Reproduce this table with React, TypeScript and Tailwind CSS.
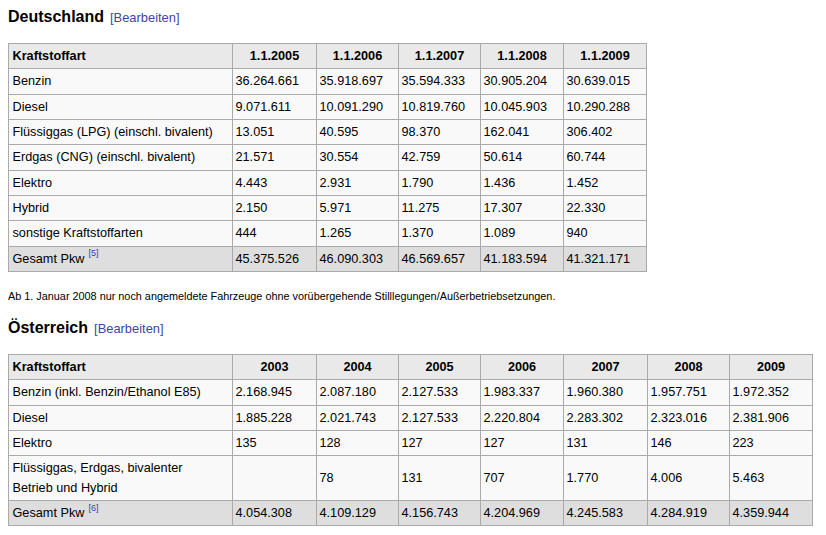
import React from "react";

const font = { fontFamily: '"Liberation Sans", Arial, sans-serif' };

type Row = { label: React.ReactNode; values: string[]; total?: boolean };

function Sup({ n }: { n: string }) {
  return (
    <sup className="text-[9px] text-[#3a46a8] relative -top-[1px] align-super leading-none ml-[4px]">[{n}]</sup>
  );
}

function Table({ headers, widths, rows, width }: { headers: string[]; widths: number[]; rows: Row[]; width: number }) {
  return (
    <table
      className="border-collapse table-fixed border border-[#aaaaaa] bg-[#f9f9f9] text-[12.7px] text-black"
      style={{ width }}
    >
      <colgroup>
        {widths.map((w, i) => (
          <col key={i} style={{ width: w }} />
        ))}
      </colgroup>
      <thead>
        <tr className="bg-[#e9e9e9]">
          {headers.map((h, i) => (
            <th
              key={i}
              className={`border border-[#aaaaaa] px-[2.5px] pt-[3px] pb-[2px] leading-[19.33px] font-bold ${i === 0 ? "text-left pl-[3.5px]" : "text-center"}`}
            >
              {h}
            </th>
          ))}
        </tr>
      </thead>
      <tbody>
        {rows.map((r, ri) => (
          <tr key={ri} className={r.total ? "bg-[#dedede]" : ""}>
            <td className="border border-[#aaaaaa] pl-[3.5px] pr-[2.5px] pt-[3px] pb-[2px] leading-[19.33px] align-middle">{r.label}</td>
            {r.values.map((v, vi) => (
              <td key={vi} className="border border-[#aaaaaa] px-[2.5px] pt-[3px] pb-[2px] leading-[19.33px] align-middle whitespace-nowrap">
                {v}
              </td>
            ))}
          </tr>
        ))}
      </tbody>
    </table>
  );
}

function Heading({ title }: { title: string }) {
  return (
    <div className="leading-[18px] whitespace-nowrap">
      <span className="text-[16px] font-bold text-black">{title}</span>
      <span className="ml-[6px] text-[12.9px] text-[#3a46a8]">[Bearbeiten]</span>
    </div>
  );
}

export default function App() {
  const deRows: Row[] = [
    { label: "Benzin", values: ["36.264.661", "35.918.697", "35.594.333", "30.905.204", "30.639.015"] },
    { label: "Diesel", values: ["9.071.611", "10.091.290", "10.819.760", "10.045.903", "10.290.288"] },
    { label: "Flüssiggas (LPG) (einschl. bivalent)", values: ["13.051", "40.595", "98.370", "162.041", "306.402"] },
    { label: "Erdgas (CNG) (einschl. bivalent)", values: ["21.571", "30.554", "42.759", "50.614", "60.744"] },
    { label: "Elektro", values: ["4.443", "2.931", "1.790", "1.436", "1.452"] },
    { label: "Hybrid", values: ["2.150", "5.971", "11.275", "17.307", "22.330"] },
    { label: "sonstige Kraftstoffarten", values: ["444", "1.265", "1.370", "1.089", "940"] },
    {
      label: (
        <>
          Gesamt Pkw<Sup n="5" />
        </>
      ),
      values: ["45.375.526", "46.090.303", "46.569.657", "41.183.594", "41.321.171"],
      total: true,
    },
  ];
  const atRows: Row[] = [
    { label: "Benzin (inkl. Benzin/Ethanol E85)", values: ["2.168.945", "2.087.180", "2.127.533", "1.983.337", "1.960.380", "1.957.751", "1.972.352"] },
    { label: "Diesel", values: ["1.885.228", "2.021.743", "2.127.533", "2.220.804", "2.283.302", "2.323.016", "2.381.906"] },
    { label: "Elektro", values: ["135", "128", "127", "127", "131", "146", "223"] },
    {
      label: (
        <>
          Flüssiggas, Erdgas, bivalenter
          <br />
          Betrieb und Hybrid
        </>
      ),
      values: ["", "78", "131", "707", "1.770", "4.006", "5.463"],
    },
    {
      label: (
        <>
          Gesamt Pkw<Sup n="6" />
        </>
      ),
      values: ["4.054.308", "4.109.129", "4.156.743", "4.204.969", "4.245.583", "4.284.919", "4.359.944"],
      total: true,
    },
  ];

  return (
    <div className="w-[826px] h-[535px] overflow-hidden bg-white pl-[8px] pt-[8px]" style={font}>
      <Heading title="Deutschland" />
      <div className="mt-[16px]">
        <Table
          headers={["Kraftstoffart", "1.1.2005", "1.1.2006", "1.1.2007", "1.1.2008", "1.1.2009"]}
          widths={[224, 84, 82, 82, 83, 83]}
          width={639}
          rows={deRows}
        />
      </div>
      <div className="mt-[17px] text-[10.85px] leading-[14px] text-black whitespace-nowrap">
        Ab 1. Januar 2008 nur noch angemeldete Fahrzeuge ohne vorübergehende Stilllegungen/Außerbetriebsetzungen.
      </div>
      <div className="mt-[16px]">
        <Heading title="Österreich" />
      </div>
      <div className="mt-[16px]">
        <Table
          headers={["Kraftstoffart", "2003", "2004", "2005", "2006", "2007", "2008", "2009"]}
          widths={[224, 84, 82, 82, 83, 84, 82, 83]}
          width={805}
          rows={atRows}
        />
      </div>
    </div>
  );
}
